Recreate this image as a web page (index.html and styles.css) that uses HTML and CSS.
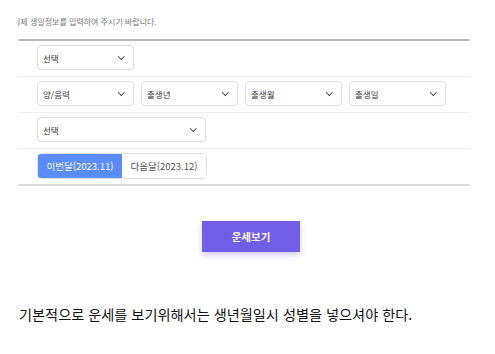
FILE: index.html
```html
<!DOCTYPE html>
<html lang="ko">
    <head>
        <meta charset="UTF-8" />
        <title>운세보기</title>
        <link rel="stylesheet" href="styles.css">
    </head>
    <body>
        <div class="wrap">
            <p class="note"><span>실제 생일정보를 입력하여 주시기 바랍니다.</span></p>

            <div class="table">
                <div class="row">
                    <div class="select w97">선택 <i class="arrow"></i></div>
                </div>
                <div class="row">
                    <div class="select w97">양/음력 <i class="arrow"></i></div>
                    <div class="select w97">출생년 <i class="arrow"></i></div>
                    <div class="select w97">출생월 <i class="arrow"></i></div>
                    <div class="select w97">출생일 <i class="arrow"></i></div>
                </div>
                <div class="row">
                    <div class="select w168">선택 <i class="arrow"></i></div>
                </div>
                <div class="row">
                    <div class="tabs">
                        <button class="tab on">이번달(2023.11)</button>
                        <button class="tab">다음달(2023.12)</button>
                    </div>
                </div>
            </div>

            <div class="btn-area">
                <button class="btn">운세보기</button>
            </div>
        </div>

        <p class="desc">기본적으로 운세를 보기위해서는 생년월일시 성별을 넣으셔야 한다.</p>
    </body>
</html>
```

FILE: styles.css
```css
body {
    margin: 0;
    font-family: "Noto Sans CJK KR", "Noto Sans", sans-serif;
    color: #333;
    background: #fff;
}
.wrap {
    width: 452px;
    margin-left: 18px;
}
.note {
    margin: 0;
    padding-top: 16px;
    height: 23px;
    overflow: hidden;
    white-space: nowrap;
    font-size: 8px;
    line-height: 12px;
    color: #777;
}
.note span {
    margin-left: -5px;
}
.table {
    border-top: 2px solid #bbb;
    border-bottom: 2px solid #ddd;
}
.row {
    display: flex;
    gap: 7px;
    padding: 4px 0 6px 19px;
    border-bottom: 1px solid #eee;
}
.row:last-child {
    border-bottom: none;
    padding-bottom: 5px;
}
.select {
    height: 25px;
    box-sizing: border-box;
    border: 1px solid #ddd;
    border-radius: 4px;
    display: flex;
    align-items: center;
    justify-content: space-between;
    padding: 0 10px 0 5px;
    font-size: 8.5px;
    color: #333;
}
.w97 {
    width: 97px;
}
.w168 {
    width: 169px;
}
.arrow {
    width: 3.5px;
    height: 3.5px;
    border-right: 1.2px solid #555;
    border-bottom: 1.2px solid #555;
    transform: rotate(45deg);
    margin-top: -3px;
}
.tabs {
    display: flex;
    height: 26px;
    border: 1px solid #e2e2e2;
    border-radius: 4px;
    overflow: hidden;
    box-sizing: border-box;
}
.tab {
    border: none;
    background: #fff;
    font-family: inherit;
    font-size: 9.5px;
    color: #555;
    padding: 0;
    width: 84px;
}
.tab.on {
    background: #5b8cfb;
    color: #fff;
}
.btn-area {
    display: flex;
    justify-content: center;
    padding-top: 35px;
}
.btn {
    width: 98px;
    height: 31px;
    border: none;
    background: #705de8;
    color: #fff;
    font-family: inherit;
    font-size: 10.5px;
    font-weight: bold;
    box-shadow: 0 3px 6px rgba(112, 93, 232, 0.3);
    margin-left: 14px;
}
.desc {
    margin: 52px 0 0 19px;
    font-size: 14.2px;
    color: #111;
}
```
